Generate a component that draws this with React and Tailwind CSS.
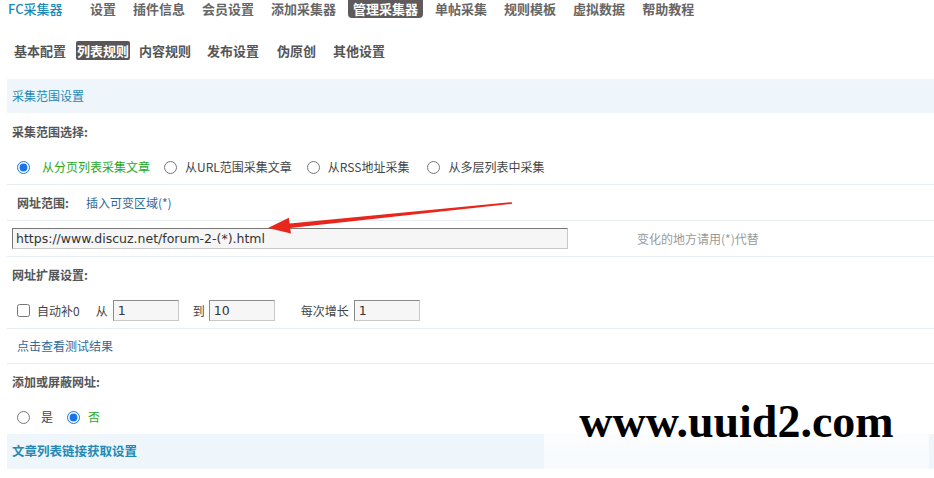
import React from "react";

const cjk = '"Noto Sans CJK SC", "Noto Sans", sans-serif';

function Radio({ checked }) {
  return (
    <input
      type="radio"
      readOnly
      checked={checked}
      className="m-0 h-[13px] w-[13px] accent-[#1a73e8]"
    />
  );
}

function Row({ children, className = "", border = true }) {
  return (
    <div
      className={`flex items-center ${border ? "border-b border-[#e6edf3]" : ""} ${className}`}
    >
      {children}
    </div>
  );
}

function SmallInput({ value }) {
  return (
    <div className="h-[21px] w-[66px] border border-[#c9c9c9] border-t-[#8a8a8a] border-l-[#8a8a8a] bg-[#f6f6f6] pl-[4px] text-[12.5px] leading-[19px] text-[#333] [font-family:'DejaVu_Sans',sans-serif]">
      {value}
    </div>
  );
}

export default function App() {
  return (
    <div
      className="relative h-[478px] w-[934px] overflow-hidden bg-white text-[12px] text-[#444]"
      style={{ fontFamily: cjk }}
    >
      {/* top nav */}
      <div className="flex h-[18px] items-center pl-[8px] text-[13px] font-bold text-[#666]">
        <span className="w-[77px] text-[#1b8ab8] [font-weight:500]">FC采集器</span>
        <div className="flex items-center gap-[7px]">
          <span className="px-[5px]">设置</span>
          <span className="px-[5px]">插件信息</span>
          <span className="px-[5px]">会员设置</span>
          <span className="px-[5px]">添加采集器</span>
          <span className="flex h-[18px] items-center rounded-b-[4px] bg-[#5f5b5c] px-[5px] text-white">
            管理采集器
          </span>
          <span className="px-[5px]">单帖采集</span>
          <span className="px-[5px]">规则模板</span>
          <span className="px-[5px]">虚拟数据</span>
          <span className="px-[5px]">帮助教程</span>
        </div>
      </div>

      {/* sub tabs */}
      <div className="mt-[23px] flex h-[19px] items-center text-[13px] font-bold text-[#555]">
        <span className="ml-[14px]">基本配置</span>
        <span className="ml-[10px] flex h-[19px] items-center rounded-[2px] bg-[#5a5556] px-[1px] text-white">
          列表规则
        </span>
        <span className="ml-[9px]">内容规则</span>
        <span className="ml-[16px]">发布设置</span>
        <span className="ml-[18px]">伪原创</span>
        <span className="ml-[17px]">其他设置</span>
      </div>

      {/* content */}
      <div className="ml-[7px] mt-[19px]">
        <div className="flex h-[34px] items-center bg-[#eef5fb] pl-[5px] text-[12px] text-[#2389b4]">
          采集范围设置
        </div>

        <Row border={false} className="h-[37px] pl-[5px] font-bold text-[#555]">
          采集范围选择:
        </Row>
        <Row className="h-[35px] pl-[10px]">
          <Radio checked />
          <span className="ml-[12px] text-[#1ea81e]">从分页列表采集文章</span>
          <span className="ml-[14px] flex"><Radio /></span>
          <span className="ml-[8px]">从URL范围采集文章</span>
          <span className="ml-[15px] flex"><Radio /></span>
          <span className="ml-[8px]">从RSS地址采集</span>
          <span className="ml-[18px] flex"><Radio /></span>
          <span className="ml-[8px]">从多层列表中采集</span>
        </Row>

        <Row className="h-[36px] pl-[10px]">
          <span className="font-bold text-[#555]">网址范围:</span>
          <span className="ml-[17px] text-[#2f6a9a]">插入可变区域(*)</span>
        </Row>

        <Row className="h-[36px] pl-[5px]">
          <div className="h-[21px] w-[556px] border border-[#c9c9c9] border-t-[#777] border-l-[#777] bg-[#f6f6f6] pl-[3px] text-[12.5px] leading-[19px] text-[#333] [font-family:'DejaVu_Sans',sans-serif]">
            https://www.discuz.net/forum-2-(*).html
          </div>
          <span className="ml-[69px] text-[#999]">变化的地方请用(*)代替</span>
        </Row>

        <Row border={false} className="h-[36px] pl-[5px] font-bold text-[#555]">
          网址扩展设置:
        </Row>

        <Row className="h-[36px] pl-[10px]">
          <input type="checkbox" readOnly className="m-0 h-[13px] w-[13px]" />
          <span className="ml-[7px]">自动补0</span>
          <span className="ml-[16px]">从</span>
          <span className="ml-[5px]"><SmallInput value="1" /></span>
          <span className="ml-[14px]">到</span>
          <span className="ml-[4px]"><SmallInput value="10" /></span>
          <span className="ml-[26px]">每次增长</span>
          <span className="ml-[5px]"><SmallInput value="1" /></span>
        </Row>

        <Row className="h-[35px] pl-[10px] text-[#2f6a9a]">点击查看测试结果</Row>

        <Row border={false} className="h-[36px] pl-[5px] font-bold text-[#555]">
          添加或屏蔽网址:
        </Row>
        <Row border={false} className="h-[34px] pl-[10px]">
          <Radio />
          <span className="ml-[11px]">是</span>
          <span className="ml-[14px] flex"><Radio checked /></span>
          <span className="ml-[8px] text-[#1ea81e]">否</span>
        </Row>

        <div className="flex h-[35px] items-center bg-[#eef5fb] pl-[5px] text-[12.5px] font-bold text-[#2389b4]">
          文章列表链接获取设置
        </div>
      </div>

      {/* red arrow annotation */}
      <svg className="pointer-events-none absolute left-0 top-0" width="934" height="478">
        <polygon
          fill="#e8261c"
          points="268,228 291,233.5 290.1,227.9 512.2,203.8 511.8,202.2 289.7,223.6 288.8,217.8"
        />
      </svg>

      {/* watermark */}
      <div className="absolute left-[544px] top-[410px] flex h-[63px] w-[385px] items-start justify-center bg-gradient-to-b from-white/90 to-white/50">
        <span className="-mt-[11px] text-[46px] font-bold leading-none text-black [font-family:'Liberation_Serif',serif]">
          www.uuid2.com
        </span>
      </div>
    </div>
  );
}
